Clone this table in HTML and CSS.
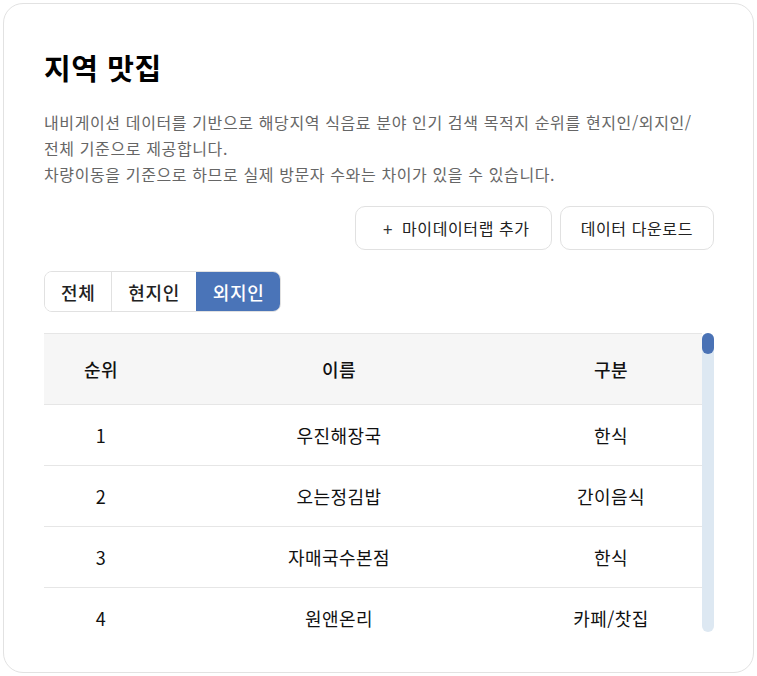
FILE: index.html
```html
<!DOCTYPE html>
<html lang="ko">
<head>
<meta charset="utf-8">
<title>지역 맛집</title>
<link rel="stylesheet" href="styles.css">
</head>
<body>
<div class="card">
  <h2 class="title">지역 맛집</h2>
  <p class="desc">내비게이션 데이터를 기반으로 해당지역 식음료 분야 인기 검색 목적지 순위를 현지인/외지인/전체 기준으로 제공합니다.<br>차량이동을 기준으로 하므로 실제 방문자 수와는 차이가 있을 수 있습니다.</p>
  <div class="actions">
    <button class="btn btn-add"><span class="plus">+</span>마이데이터랩 추가</button>
    <button class="btn">데이터 다운로드</button>
  </div>
  <div class="tabs">
    <button class="tab">전체</button>
    <button class="tab">현지인</button>
    <button class="tab active">외지인</button>
  </div>
  <div class="table-wrap">
    <div class="table-view">
      <table class="rank-table">
        <colgroup><col class="c1"><col class="c2"><col class="c3"></colgroup>
        <thead>
          <tr><th>순위</th><th>이름</th><th>구분</th></tr>
        </thead>
        <tbody>
          <tr><td>1</td><td>우진해장국</td><td>한식</td></tr>
          <tr><td>2</td><td>오는정김밥</td><td>간이음식</td></tr>
          <tr><td>3</td><td>자매국수본점</td><td>한식</td></tr>
          <tr><td>4</td><td>원앤온리</td><td>카페/찻집</td></tr>
        </tbody>
      </table>
    </div>
    <div class="scrollbar"><div class="thumb"></div></div>
  </div>
</div>
</body>
</html>
```
FILE: styles.css
```css
* { box-sizing: border-box; }
html, body { margin: 0; background: #fff; }
body {
  padding: 3px;
  font-family: "Noto Sans CJK KR", "Noto Sans", sans-serif;
  color: #111;
}
.card {
  height: 670px;
  border: 1px solid #e2e2e2;
  border-radius: 20px;
  padding: 42px 39px 40px 40px;
  display: flex;
  flex-direction: column;
}
.title {
  margin: 0;
  font-size: 29px;
  line-height: 42px;
  font-weight: 700;
  letter-spacing: 0.6px;
  color: #000;
}
.desc {
  margin: 21px 0 0;
  font-size: 16px;
  line-height: 26px;
  letter-spacing: 0.62px;
  word-break: keep-all;
  color: #666;
}
.actions {
  margin-top: 19px;
  display: flex;
  justify-content: flex-end;
  gap: 8px;
}
.btn {
  height: 44px;
  padding: 0 20px;
  border: 1px solid #e1e1e1;
  border-radius: 10px;
  background: #fff;
  font-family: inherit;
  font-size: 16px;
  letter-spacing: 0.6px;
  color: #222;
  display: flex;
  align-items: center;
}
.btn-add { padding: 0 21px 0 27px; }
.plus { margin-right: 9px; font-size: 17px; color: #333; }
.tabs {
  margin-top: 21px;
  display: flex;
  align-self: flex-start;
  border: 1px solid #e1e1e1;
  border-radius: 8px;
  overflow: hidden;
}
.tab {
  height: 39px;
  padding: 0 16px;
  border: 0;
  background: #fff;
  font-family: inherit;
  font-size: 18px;
  font-weight: 500;
  letter-spacing: 0.6px;
  color: #222;
}
.tab + .tab { border-left: 1px solid #e1e1e1; }
.tab.active {
  background: #4a74b8;
  color: #fff;
  border-left-color: #4a74b8;
}
.table-wrap {
  margin-top: 21px;
  height: 299px;
  display: flex;
}
.table-view {
  flex: 1;
  overflow: hidden;
  border-top: 1px solid #e6e6e6;
}
.rank-table {
  width: 100%;
  border-collapse: collapse;
  table-layout: fixed;
  font-size: 18px;
  letter-spacing: 0.4px;
}
.c1 { width: 114px; }
.c2 { width: 362px; }
.rank-table th {
  height: 70px;
  background: #f6f6f6;
  font-weight: 500;
  color: #111;
  border-bottom: 1px solid #e6e6e6;
}
.rank-table td {
  height: 61px;
  text-align: center;
  color: #111;
  border-bottom: 1px solid #e6e6e6;
}
.scrollbar {
  width: 12px;
  background: #dde8f2;
  border-radius: 6px;
}
.thumb {
  height: 21px;
  background: #4a72b5;
  border-radius: 6px;
}
```
